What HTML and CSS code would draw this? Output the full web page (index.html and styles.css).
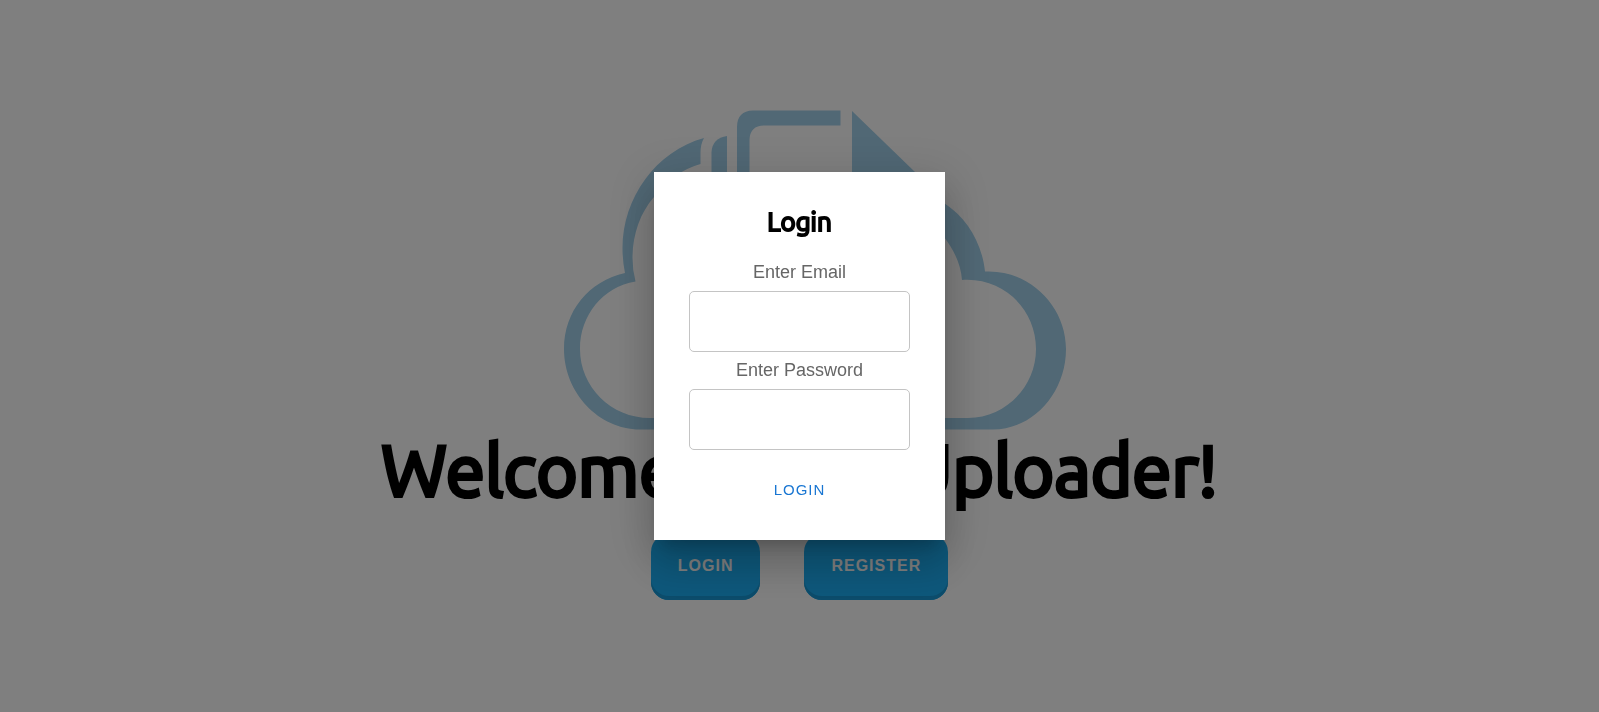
FILE: index.html
```html
<!DOCTYPE html>
<html lang="en">
<head>
<meta charset="utf-8">
<meta name="viewport" content="width=device-width, initial-scale=1">
<title>Uploader</title>
<link rel="stylesheet" href="styles.css">
</head>
<body>
<main class="home">
  <svg class="logo" viewBox="533 110 533 320" aria-hidden="true">
    <path d="M704 138C656 151 622.500 198 622.500 248Q622.500 261 625 273C589 281 564 311 564 349C564 393 599 429.500 640 429.500H993C1033 429.500 1066 393 1066 349C1066 305 1028 269 985 271.500C982 243 967 218 944 203C920 187 890 180 860 180V200C890 200 922 207 944 237C955 251 961 266 962 280C1003 277 1036 309 1036 349C1036 387 1005 418 968 418H650C611 418 580 387 580 349C580 315 603 287 635.500 281.500Q632.500 270 632.500 258C632.500 235 640 213 654 197C667 180 682 169 700.500 164V153Q700.500 144 704 138Z"/>
    <path d="M727 136V260H711.500V152Q712.500 138 727 136Z"/>
    <path d="M840.500 110.500H753Q737 111 737 127V260H749.500V140Q750 125.500 764 125.500H840.500Z"/>
    <path d="M852 111V172H915Z"/>
  </svg>
  <h1 class="title">Welcome to the Uploader!</h1>
  <div class="actions">
    <button class="action" type="button">Login</button>
    <button class="action" type="button">Register</button>
  </div>
</main>
<div class="backdrop">
  <form class="dialog" role="dialog" aria-modal="true" aria-labelledby="dialog-title">
    <h2 class="dialog-title" id="dialog-title">Login</h2>
    <label class="label" for="email">Enter Email</label>
    <input class="field" id="email" type="email">
    <label class="label" for="password">Enter Password</label>
    <input class="field" id="password" type="password">
    <button class="submit" type="button">Login</button>
  </form>
</div>
</body>
</html>
```
FILE: styles.css
```css
* {
  box-sizing: border-box;
}

body {
  margin: 0;
  background: #fff;
  color: #000;
  font-family: "Liberation Sans", Arial, sans-serif;
}

.home {
  display: flex;
  flex-direction: column;
  align-items: center;
  padding: 110px 16px 0;
}

.logo {
  display: block;
  width: 533px;
  max-width: 100%;
  fill: #a2d0ea;
}

.title {
  margin: 0;
  font-family: Ubuntu, "Noto Sans", sans-serif;
  font-size: 71px;
  font-weight: 400;
  line-height: 80px;
  text-align: center;
  -webkit-text-stroke: 4px #000;
}

.actions {
  display: flex;
  gap: 44px;
  margin-top: 24px;
}

.action {
  height: 66px;
  padding: 0 27px 2px;
  border: 0;
  border-radius: 18px;
  background: #1cb0f6;
  box-shadow: inset 0 -4px 0 #1899d6;
  color: #fff;
  font: bold 16px/20px "Liberation Sans", Arial, sans-serif;
  letter-spacing: 1px;
  text-transform: uppercase;
}

.backdrop {
  position: fixed;
  inset: 0;
  display: flex;
  align-items: center;
  justify-content: center;
  background: rgba(0, 0, 0, 0.5);
}

.dialog {
  display: flex;
  flex-direction: column;
  align-items: center;
  width: 291px;
  padding: 32px 35px 30px;
  background: #fff;
  box-shadow: 0 11px 15px -7px rgba(0, 0, 0, 0.2), 0 24px 38px 3px rgba(0, 0, 0, 0.14), 0 9px 46px 8px rgba(0, 0, 0, 0.12);
}

.dialog-title {
  margin: 0 0 16px;
  font-family: Ubuntu, "Noto Sans", sans-serif;
  font-size: 26px;
  font-weight: 400;
  line-height: 36px;
  -webkit-text-stroke: 2px #000;
}

.label {
  margin-bottom: 3px;
  color: #666;
  font-size: 18px;
  line-height: 32px;
}

.field {
  width: 100%;
  height: 61px;
  margin-bottom: 2px;
  padding: 16px;
  border: 1px solid #c4c4c4;
  border-radius: 5px;
  background: #fff;
  font: 18px/24px "Liberation Sans", Arial, sans-serif;
}

.submit {
  margin-top: 18px;
  padding: 8px;
  border: 0;
  background: none;
  color: #1976d2;
  font: 15px/24px "Liberation Sans", Arial, sans-serif;
  letter-spacing: 1px;
  text-transform: uppercase;
}
```
